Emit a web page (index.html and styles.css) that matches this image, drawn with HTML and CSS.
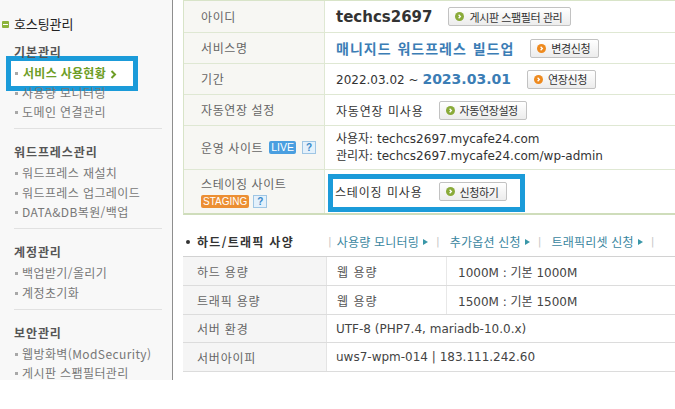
FILE: index.html
```html
<!DOCTYPE html>
<html lang="ko">
<head>
<meta charset="utf-8">
<title>서비스 사용현황</title>
<link rel="stylesheet" href="styles.css">
</head>
<body>
<div class="page">
  <aside class="side">
    <div class="side-title"><span class="minus"></span>호스팅관리</div>
    <div class="grp-h g1">기본관리</div>
    <ul class="items">
      <li class="on">서비스 사용현황<svg class="chev" width="7" height="9" viewBox="0 0 7 9"><path d="M1.5 1 L5 4.5 L1.5 8" fill="none" stroke="#6e9d25" stroke-width="2"/></svg></li>
      <li>사용량 모니터링</li>
      <li>도메인 연결관리</li>
    </ul>
    <div class="sep"></div>
    <div class="grp-h">워드프레스관리</div>
    <ul class="items">
      <li>워드프레스 재설치</li>
      <li>워드프레스 업그레이드</li>
      <li>DATA&amp;DB복원/백업</li>
    </ul>
    <div class="sep"></div>
    <div class="grp-h">계정관리</div>
    <ul class="items">
      <li>백업받기/올리기</li>
      <li>계정초기화</li>
    </ul>
    <div class="sep"></div>
    <div class="grp-h">보안관리</div>
    <ul class="items">
      <li>웹방화벽(ModSecurity)</li>
      <li>게시판 스팸필터관리</li>
    </ul>
  </aside>

  <main class="main">
    <div class="t1">
      <div class="r r1">
        <div class="lab">아이디</div>
        <div class="val"><span class="uid">techcs2697</span><span class="btn"><svg class="ic g" viewBox="0 0 10 10"><circle cx="5" cy="5" r="5"/><path d="M4 3 L6 5 L4 7"/></svg>게시판 스팸필터 관리</span></div>
      </div>
      <div class="r r2">
        <div class="lab">서비스명</div>
        <div class="val"><span class="svc">매니지드 워드프레스 빌드업</span><span class="btn"><svg class="ic o" viewBox="0 0 10 10"><circle cx="5" cy="5" r="5"/><path d="M4 3 L6 5 L4 7"/></svg>변경신청</span></div>
      </div>
      <div class="r r3">
        <div class="lab">기간</div>
        <div class="val"><span class="period">2022.03.02 ~ <b class="end">2023.03.01</b></span><span class="btn"><svg class="ic o" viewBox="0 0 10 10"><circle cx="5" cy="5" r="5"/><path d="M4 3 L6 5 L4 7"/></svg>연장신청</span></div>
      </div>
      <div class="r r4">
        <div class="lab">자동연장 설정</div>
        <div class="val"><span class="txt">자동연장 미사용</span><span class="btn"><svg class="ic g" viewBox="0 0 10 10"><circle cx="5" cy="5" r="5"/><path d="M4 3 L6 5 L4 7"/></svg>자동연장설정</span></div>
      </div>
      <div class="r r5">
        <div class="lab"><span>운영 사이트</span><span class="live">LIVE</span><span class="q">?</span></div>
        <div class="val lines">
          <div>사용자: techcs2697.mycafe24.com</div>
          <div>관리자: techcs2697.mycafe24.com/wp-admin</div>
        </div>
      </div>
      <div class="r r6">
        <div class="lab col">
          <span>스테이징 사이트</span>
          <span class="badges"><span class="stg">STAGING</span><span class="q">?</span></span>
        </div>
        <div class="val stage"><span class="txt">스테이징 미사용</span><span class="btn"><svg class="ic g" viewBox="0 0 10 10"><circle cx="5" cy="5" r="5"/><path d="M4 3 L6 5 L4 7"/></svg>신청하기</span><span class="hl"></span></div>
      </div>
    </div>

    <div class="spec-head">
      <div class="spec-title"><span class="dot"></span>하드/트래픽 사양</div>
      <span class="bar first">|</span>
      <span class="lnk">사용량 모니터링<span class="tri"></span></span>
      <span class="bar">|</span>
      <span class="lnk">추가옵션 신청<span class="tri"></span></span>
      <span class="bar">|</span>
      <span class="lnk">트래픽리셋 신청<span class="tri"></span></span>
      <span class="bar">|</span>
    </div>

    <div class="t2">
      <div class="r2r h29">
        <div class="l2">하드 용량</div>
        <div class="s2">웹 용량</div>
        <div class="v2">1000M : 기본 1000M</div>
      </div>
      <div class="r2r h29">
        <div class="l2">트래픽 용량</div>
        <div class="s2">웹 용량</div>
        <div class="v2">1500M : 기본 1500M</div>
      </div>
      <div class="r2r h28">
        <div class="l2">서버 환경</div>
        <div class="v2 wide">UTF-8 (PHP7.4, mariadb-10.0.x)</div>
      </div>
      <div class="r2r h29">
        <div class="l2">서버아이피</div>
        <div class="v2 wide">uws7-wpm-014 | 183.111.242.60</div>
      </div>
    </div>
  </main>
</div>
</body>
</html>
```

FILE: styles.css
```css
html, body {
  margin: 0;
  padding: 0;
  background: #fff;
  overflow: hidden;
}

.page {
  display: flex;
  align-items: flex-start;
  width: 720px;
}

/* ---------- sidebar ---------- */
.side {
  position: relative;
  z-index: 0;
  flex: none;
  width: 172px;
  height: 380px;
  background: #f8f8f8;
  border-right: 1px solid #8e8e8e;
  font-family: "Noto Sans CJK KR", sans-serif;
}

.side-title {
  padding: 14px 0 0 2px;
  line-height: 20px;
  font-size: 13px;
  color: #222;
  letter-spacing: -0.1px;
  display: flex;
  align-items: center;
}

.minus {
  position: relative;
  display: inline-block;
  width: 7px;
  height: 7px;
  margin-right: 5px;
  background: #8db43c;
  border-radius: 1px;
}
.minus::after {
  content: "";
  position: absolute;
  left: 1px;
  top: 3px;
  width: 5px;
  height: 1px;
  background: #fff;
}

.grp-h {
  margin-top: 13px;
  padding-left: 14px;
  line-height: 20px;
  font-size: 12px;
  font-weight: bold;
  color: #555;
  letter-spacing: 0.9px;
}
.grp-h.g1 { margin-top: 8px; }

.items {
  list-style: none;
  margin: 1px 0 0;
  padding: 0 0 0 14px;
}
.items li {
  position: relative;
  padding-left: 8px;
  line-height: 19.5px;
  font-size: 12px;
  color: #777;
  letter-spacing: 0.4px;
  white-space: nowrap;
}
.items li::before {
  content: "";
  position: absolute;
  left: 1px;
  top: 9px;
  width: 3px;
  height: 3px;
  background: #a8a8a8;
}
.items li.on {
  padding-left: 9px;
  color: #6e9d25;
  font-weight: bold;
  letter-spacing: 0.3px;
}
.items li.on::after {
  content: "";
  position: absolute;
  left: -8px;
  top: -7px;
  width: 132px;
  height: 35px;
  box-sizing: border-box;
  border: 5px solid #1b9bd9;
  background: #fff;
  z-index: -1;
}
.chev {
  margin-left: 4px;
  vertical-align: -1px;
}

.sep {
  height: 1px;
  margin: 6.5px 10px 0 14px;
  background: #e1e1e1;
}

/* ---------- main ---------- */
.main {
  flex: none;
  width: 530px;
  margin-left: 10px;
  font-family: "DejaVu Sans", "Noto Sans CJK KR", sans-serif;
  font-size: 12px;
  color: #333;
}

.t1 {
  border-left: 1px solid #d8e4c8;
  border-top: 1px solid #d8e4c8;
  border-bottom: 2px solid #cfddbb;
}
.r {
  display: flex;
  box-sizing: border-box;
  border-bottom: 1px solid #dfe8d3;
}
.r:last-child { border-bottom: none; }
.r1 { height: 32px; }
.r2, .r3, .r4 { height: 31px; }
.r5 { height: 44px; }
.r6 { height: 43px; }

.lab {
  flex: none;
  box-sizing: border-box;
  width: 141px;
  padding-left: 17px;
  background: #f7f7f3;
  border-right: 1px solid #dfe8d3;
  display: flex;
  align-items: center;
  font-family: "Noto Sans CJK KR", sans-serif;
  font-size: 12px;
  color: #666;
  letter-spacing: 0.6px;
  line-height: 16px;
  white-space: nowrap;
}
.lab.col {
  flex-direction: column;
  align-items: flex-start;
  justify-content: center;
}

.val {
  flex: 1;
  position: relative;
  display: flex;
  align-items: center;
  padding-left: 11px;
  gap: 16px;
  white-space: nowrap;
}

.uid {
  font-size: 15px;
  font-weight: bold;
  color: #333;
}
.svc {
  font-size: 14px;
  font-weight: bold;
  color: #3b7db5;
  letter-spacing: 1px;
}
.period {
  font-size: 12px;
  color: #333;
}
.end {
  font-size: 14px;
  color: #3b7db5;
  letter-spacing: 0;
}
.txt {
  font-size: 12px;
  color: #333;
  letter-spacing: 0.8px;
}
.r4 .val { gap: 15px; }
.stage { gap: 0; padding-left: 10px; }
.stage .btn { margin-left: 16px; }

.lines {
  flex-direction: column;
  align-items: flex-start;
  justify-content: center;
  gap: 0;
  line-height: 17px;
}

.btn {
  display: inline-flex;
  align-items: center;
  box-sizing: border-box;
  height: 19px;
  padding: 0 8px 0 6px;
  border: 1px solid #c2c2c2;
  border-radius: 2px;
  background: linear-gradient(#ffffff, #ececec);
  font-family: "Noto Sans CJK KR", sans-serif;
  font-size: 11px;
  color: #333;
  letter-spacing: -0.4px;
  white-space: nowrap;
}
.ic {
  width: 9px;
  height: 9px;
  margin-right: 5px;
  flex: none;
}
.ic path {
  fill: none;
  stroke: #fff;
  stroke-width: 1.4;
}
.ic.g circle { fill: #8aab3a; }
.ic.o circle { fill: #ee8a1e; }

.live {
  display: inline-block;
  margin-left: 6px;
  padding: 0 2px;
  height: 13px;
  line-height: 13px;
  background: #4a9fe0;
  color: #fff;
  border-radius: 2px;
  font-family: "Liberation Sans", sans-serif;
  font-size: 10.5px;
  letter-spacing: 0;
}
.q {
  display: inline-block;
  box-sizing: border-box;
  width: 14px;
  height: 13px;
  margin-left: 6px;
  line-height: 11px;
  text-align: center;
  border: 1px solid #9fc6e4;
  background: #e4f1fb;
  color: #3a88c8;
  font-family: "Liberation Sans", sans-serif;
  font-weight: bold;
  font-size: 10px;
  letter-spacing: 0;
}
.badges {
  display: flex;
  align-items: center;
  margin-top: 3px;
}
.badges .q { margin-left: 4px; }
.stg {
  display: inline-block;
  height: 13px;
  line-height: 13px;
  padding: 0 2px;
  background: #ec8f33;
  color: #fff;
  border-radius: 2px;
  font-family: "Liberation Sans", sans-serif;
  font-size: 10px;
  letter-spacing: 0;
}

.hl {
  position: absolute;
  left: 3px;
  top: 4px;
  width: 197px;
  height: 38px;
  box-sizing: border-box;
  border: 5px solid #1b9bd9;
  pointer-events: none;
}

/* ---------- spec heading ---------- */
.spec-head {
  display: flex;
  align-items: center;
  height: 16px;
  margin-top: 19px;
  font-family: "Noto Sans CJK KR", sans-serif;
  font-size: 12px;
  line-height: 16px;
  white-space: nowrap;
}
.spec-title {
  flex: none;
  width: 142px;
  display: flex;
  align-items: center;
  padding-left: 3px;
  box-sizing: border-box;
  font-weight: bold;
  color: #333;
  letter-spacing: 1.3px;
}
.dot {
  width: 4px;
  height: 4px;
  border-radius: 50%;
  background: #333;
  margin-right: 7px;
}
.bar {
  color: #c8c8c8;
  margin: 0 10px 0 0;
  font-family: "DejaVu Sans", sans-serif;
  font-size: 11px;
}
.bar.first { margin: 0 5px 0 3px; }
.lnk {
  display: inline-flex;
  align-items: center;
  color: #3a86a0;
  letter-spacing: 0.2px;
}
.tri {
  display: inline-block;
  width: 0;
  height: 0;
  margin-left: 4px;
  margin-right: 8px;
  border-left: 5px solid #3a97a8;
  border-top: 3.5px solid transparent;
  border-bottom: 3.5px solid transparent;
}

/* ---------- table 2 ---------- */
.t2 {
  margin-top: 6px;
  border-top: 1px solid #d2d2d2;
}
.r2r {
  display: flex;
  box-sizing: border-box;
  border-bottom: 1px solid #dcdcdc;
}
.h29 { height: 29px; }
.h28 { height: 28px; }
.l2, .s2, .v2 {
  display: flex;
  align-items: center;
  box-sizing: border-box;
  white-space: nowrap;
}
.l2 {
  flex: none;
  width: 144px;
  padding-left: 14px;
  background: #f5f5f5;
  border-right: 1px solid #e4e4e4;
  font-family: "Noto Sans CJK KR", sans-serif;
  color: #666;
  letter-spacing: 0.8px;
}
.s2 {
  flex: none;
  width: 120px;
  padding-left: 10px;
  border-right: 1px solid #e8e8e8;
  font-family: "Noto Sans CJK KR", sans-serif;
  color: #555;
  letter-spacing: 1px;
}
.v2 {
  flex: 1;
  padding-left: 11px;
  color: #444;
}
.v2.wide { padding-left: 9px; }
```
